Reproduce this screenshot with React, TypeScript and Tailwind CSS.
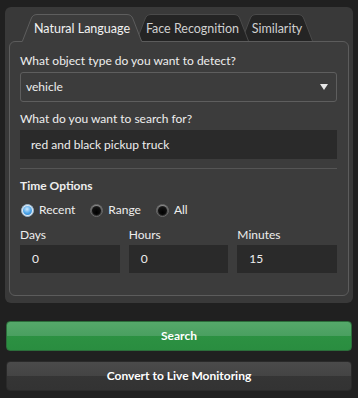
import React from 'react';

const font = { fontFamily: 'Lato, "Noto Sans", sans-serif' };

function Tab({
  label,
  width,
  active,
  className,
}: {
  label: string;
  width: number;
  active?: boolean;
  className?: string;
}) {
  const h = 27;
  const s = 9;
  const d = `M0.5,${h} L${s},5 Q${s + 1.5},0.5 ${s + 6},0.5 L${width - s - 6},0.5 Q${width - s - 1.5},0.5 ${width - s},5 L${width - 0.5},${h}`;
  return (
    <div className={`relative h-[27px] shrink-0 ${className ?? ''}`} style={{ width }}>
      <svg className="absolute inset-0" width={width} height={h + 1} viewBox={`0 0 ${width} ${h + 1}`}>
        <path d={d + (active ? ` L${width - 0.5},${h + 1} L0.5,${h + 1} Z` : ' Z')} fill={active ? '#3c3c3c' : '#242424'} />
        <path d={d} fill="none" stroke={active ? '#5e5e5e' : '#4a4a4a'} strokeWidth="1" />
      </svg>
      <span
        className={`relative flex h-full items-center justify-center pt-[3px] text-[12.5px] ${
          active ? 'text-[#f2f2f2]' : 'text-[#d0d0d0]'
        }`}
      >
        {label}
      </span>
    </div>
  );
}

function Radio({ label, checked }: { label: string; checked?: boolean }) {
  return (
    <div className="flex items-center gap-[5px]">
      {checked ? (
        <span className="flex h-[13px] w-[13px] items-center justify-center rounded-full border border-[#9ab6cc] bg-[#dfe9f2]">
          <span className="h-[9px] w-[9px] rounded-full bg-[radial-gradient(circle_at_45%_35%,#cfeaff_0%,#4aa3e8_55%,#1c74c6_100%)]" />
        </span>
      ) : (
        <span className="flex h-[13px] w-[13px] items-center justify-center rounded-full border border-[#6a6a6a] bg-[linear-gradient(#8a8a8a,#2a2a2a)]">
          <span className="h-[9px] w-[9px] rounded-full bg-[radial-gradient(circle_at_50%_70%,#000_0%,#111_60%,#3a3a3a_100%)]" />
        </span>
      )}
      <span className="text-[12px] text-[#eeeeee]">{label}</span>
    </div>
  );
}

function NumField({ label, value }: { label: string; value: string }) {
  return (
    <div className="flex flex-1 flex-col">
      <span className="h-[16px] text-[12px] leading-[16px] text-[#eeeeee]">{label}</span>
      <div className="mt-[2px] flex h-[28px] items-center bg-[#2a2a2a] pl-[12px] text-[12px] text-[#eeeeee]">
        {value}
      </div>
    </div>
  );
}

export default function App() {
  return (
    <div className="h-[398px] w-[358px] overflow-hidden bg-[#202020] px-[5px] pt-[7px]" style={font}>
      <div className="h-[296px] rounded-[6px] bg-[#393939] px-[4px] pt-[7px]">
        <div className="relative flex h-[27px] pl-[13px]">
          <Tab label="Natural Language" width={120} active className="z-30" />
          <Tab label="Face Recognition" width={113} className="z-20 -ml-[6px]" />
          <Tab label="Similarity" width={72} className="z-10 -ml-[8px]" />
        </div>
        <div className="h-[255px] rounded-[6px] border border-[#5c5c5c] bg-[#3c3c3c] pl-[10px] pr-[11px] pt-[11px]">
          <div className="h-[16px] text-[12px] leading-[16px] text-[#eeeeee]">What object type do you want to detect?</div>
          <div className="mt-[3px] flex h-[30px] items-center justify-between rounded-[3px] border border-[#5e5e5e] bg-[#3c3c3c] pl-[5px] pr-[8px] text-[12px] text-[#eeeeee]">
            <span>vehicle</span>
            <svg width="8" height="6" viewBox="0 0 8 6">
              <path d="M0,0 L8,0 L4,6 Z" fill="#e8e8e8" />
            </svg>
          </div>
          <div className="mt-[9px] h-[16px] text-[12px] leading-[16px] text-[#eeeeee]">What do you want to search for?</div>
          <div className="mt-[3px] flex h-[29px] items-center bg-[#2a2a2a] pl-[11px] text-[12px] text-[#eeeeee]">
            red and black pickup truck
          </div>
          <div className="mt-[9px] h-px bg-[#555555]" />
          <div className="mt-[9px] h-[16px] text-[12px] font-bold leading-[16px] text-[#eeeeee]">Time Options</div>
          <div className="mt-[8px] flex h-[16px] items-center gap-[15px] pl-[1px]">
            <Radio label="Recent" checked />
            <Radio label="Range" />
            <Radio label="All" />
          </div>
          <div className="mt-[9px] flex gap-[9px]">
            <NumField label="Days" value="0" />
            <NumField label="Hours" value="0" />
            <NumField label="Minutes" value="15" />
          </div>
        </div>
      </div>
      <div className="mx-[1px] mt-[18px] flex h-[30px] items-center justify-center rounded-[4px] border border-[#2b6d3a] bg-[linear-gradient(#55a86a_0%,#4a9f60_50%,#2c9142_50%,#2a8d40_100%)] text-[12px] font-bold text-white">
        Search
      </div>
      <div className="mx-[1px] mt-[10px] flex h-[30px] items-center justify-center rounded-[4px] border border-[#2a2a2a] bg-[linear-gradient(#4b4b4b_0%,#444444_50%,#353535_50%,#333333_100%)] text-[12px] font-bold text-white">
        Convert to Live Monitoring
      </div>
    </div>
  );
}
